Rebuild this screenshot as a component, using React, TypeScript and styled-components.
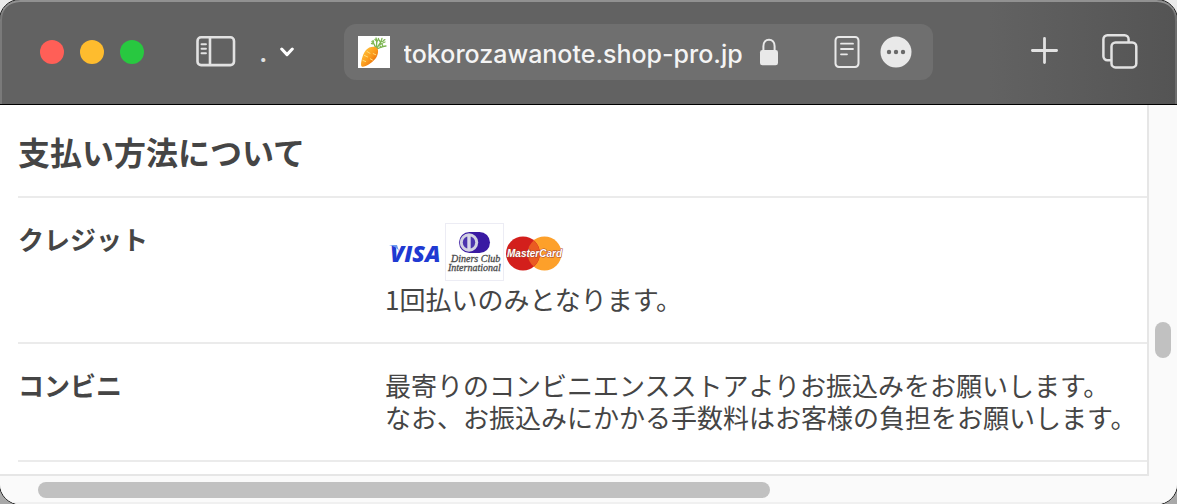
import React from "react";
import styled, { createGlobalStyle } from "styled-components";

const GlobalStyle = createGlobalStyle`
  *, *::before, *::after { box-sizing: border-box; }
  html { background: linear-gradient(#ebebeb, #a8a8a8); }
  body {
    margin: 0;
    font-family: "Noto Sans CJK JP", sans-serif;
    color: #454545;
  }
`;

const Window = styled.div`
  display: flex;
  flex-direction: column;
  min-height: 100vh;
  background: #fff;
  border-radius: 20px;
  overflow: hidden;
  outline: 1px solid #1c1c1c;
`;

const Toolbar = styled.header`
  display: flex;
  align-items: center;
  height: 105px;
  padding: 0 39px 0 40px;
  flex: none;
  background: linear-gradient(90deg, #626262 0%, #626262 84%, #545454 100%);
  border-bottom: 1px solid #000;
  border-radius: 20px 20px 0 0;
  box-shadow: inset 0 2px #919191, inset 2px 0 #7a7a7a, inset -2px 0 #6e6e6e;
`;

const WindowControls = styled.div`
  display: flex;
  gap: 16px;
  margin-right: 52px;
`;

const PlainButton = styled.button`
  display: flex;
  align-items: center;
  padding: 0;
  border: 0;
  background: none;
  color: #e2e2e2;
`;

const WindowControl = styled(PlainButton)<{ $color: string }>`
  width: 24px;
  height: 24px;
  border-radius: 50%;
  background: ${(p) => p.$color};
`;

const GroupButton = styled(PlainButton)`
  gap: 12px;
  margin: 0 50px 0 23px;
  font: 500 28px/28px Inter, sans-serif;
`;

const AddressBar = styled.form`
  display: flex;
  align-items: center;
  flex: 1;
  min-width: 0;
  height: 56px;
  padding: 0 21px 0 14px;
  border-radius: 12px;
  background: #6f6f6f;
`;

const AddressInput = styled.input`
  width: 346px;
  min-width: 0;
  margin: 0 9px 0 14px;
  padding: 4px 0 0;
  border: 0;
  outline: 0;
  background: none;
  color: #f4f4f4;
  font: 500 25px/32px Inter, sans-serif;
`;

const AddressActions = styled.div`
  display: flex;
  align-items: center;
  gap: 20px;
  margin-left: auto;
`;

const ToolbarActions = styled.div`
  display: flex;
  align-items: center;
  gap: 44px;
  margin-left: 97px;
`;

const Viewport = styled.div`
  display: flex;
  flex: 1;
`;

const Page = styled.main`
  flex: 1;
  min-width: 0;
  padding: 1px 0 12px 18px;
`;

const Heading = styled.h2`
  margin: 0;
  padding: 21px 0;
  font-size: 32px;
  line-height: 48px;
  font-weight: 700;
`;

const MethodTable = styled.table`
  width: 100%;
  border-collapse: separate;
  border-spacing: 0;
  border-bottom: 2px solid #ebebeb;
  font-size: 26px;
  line-height: 32px;
  text-align: left;
`;

const MethodName = styled.th`
  width: 367px;
  padding: 25px 0 27px;
  border-top: 2px solid #ebebeb;
  vertical-align: top;
  font-weight: 700;
`;

const MethodDetail = styled.td`
  padding: 25px 0 27px;
  border-top: 2px solid #ebebeb;
  vertical-align: top;
`;

const CardLogos = styled.div`
  display: flex;
  height: 60px;
`;

const Line = styled.p`
  margin: 0;
`;

const VerticalTrack = styled.div`
  width: 30px;
  padding: 217px 6px 0;
  background: #fafafa;
  border-left: 2px solid #e6e6e6;
`;

const VerticalThumb = styled.div`
  width: 16px;
  height: 36px;
  border-radius: 8px;
  background: #c1c1c1;
`;

const HorizontalTrack = styled.div`
  position: relative;
  height: 30px;
  padding: 6px 30px 6px 38px;
  background: #fafafa;
  border-bottom: 2px solid #f0f0f0;

  &::before {
    content: "";
    position: absolute;
    top: 0;
    left: 0;
    right: 28px;
    height: 2px;
    background: #e6e6e6;
  }
`;

const HorizontalThumb = styled.div`
  width: 66%;
  height: 16px;
  margin-top: 2px;
  border-radius: 8px;
  background: #c1c1c1;
`;

const SidebarIcon = () => (
  <svg width="40" height="32" viewBox="0 0 40 32" fill="none" stroke="currentColor" strokeWidth="2.6" aria-hidden="true">
    <rect x="1.5" y="1.3" width="36.5" height="27.8" rx="3.6" />
    <path d="M14 1.5v27.5" />
    <path d="M5.5 8.3h4.5M5.5 12.7h4.5M5.5 17.2h4.5" strokeWidth="1.9" strokeLinecap="round" />
  </svg>
);

const ChevronIcon = () => (
  <svg width="14" height="10" viewBox="0 0 14 10" fill="none" stroke="#fff" strokeWidth="3" strokeLinecap="round" strokeLinejoin="round" aria-hidden="true">
    <path d="M1.7 2 7 7.600 12.300 2" />
  </svg>
);

const Favicon = () => (
  <svg width="32" height="32" viewBox="0 0 32 32" aria-hidden="true">
    <defs>
      <linearGradient id="carrot" x1="0.2" y1="0.1" x2="0.9" y2="0.8">
        <stop offset="0" stopColor="#ffc23c" />
        <stop offset="0.55" stopColor="#fb9a1c" />
        <stop offset="1" stopColor="#e5660b" />
      </linearGradient>
    </defs>
    <rect width="32" height="32" fill="#fff" />
    <g fill="none" stroke="#7db653" strokeWidth="1.3" strokeLinecap="round">
      <path d="M17.5 13C17 9 16 7 14 5.5M18 12.5C19 8 19 5 18 2M18.500 12.500C21 9 23 7 24 2.500M19 13c3-1 5-3 9-3M20 10c3-2 4-3 7-4" />
      <path d="M13.500 7.500 16 8M15 4.500l1 2.500M17 3.500l2 2 1.500-3M21 4l1.500 2 3-1M24 8l1 2.500M22 10l1.500 2M25.500 4.500l1.500-1" strokeDasharray="1.600 1.100" />
    </g>
    <path d="M8 14c2.800-3.400 8.200-4.400 10.800-2.200 2.400 2.100 1.200 8-1.600 11.200C14.200 26.500 8 30.600 4.800 30.800 2.600 30.900 2.800 27.800 3.500 24.500 4.300 20.800 5.700 16.700 8 14Z" fill="url(#carrot)" />
    <path d="M9 15.500l3 1.800M6.500 19.500l3.200 1.500M17.800 18.800l-2.600-1.200M5 24.500l2.600 1M14.500 24l-2.200-1.200" stroke="#ffdc79" strokeWidth="1" strokeLinecap="round" />
  </svg>
);

const LockIcon = () => (
  <svg width="20" height="28" viewBox="0 0 20 28" aria-hidden="true">
    <path d="M4.400 13V8.200C4.400 4.200 6.700 1.700 10 1.700s5.600 2.500 5.600 6.500V13" fill="none" stroke="#e9e9e9" strokeWidth="2" />
    <rect x="1" y="12" width="18" height="15.300" rx="2.400" fill="#e9e9e9" />
  </svg>
);

const ReaderIcon = () => (
  <svg width="26" height="34" viewBox="0 0 26 34" fill="none" stroke="#e9e9e9" strokeWidth="2" aria-hidden="true">
    <rect x="1.500" y="2" width="23" height="30" rx="3.400" />
    <path d="M7 8.700h12M7 14h12M7 19.300h6" strokeWidth="1.800" strokeLinecap="round" />
  </svg>
);

const MoreIcon = () => (
  <svg width="32" height="32" viewBox="0 0 32 32" aria-hidden="true">
    <circle cx="16" cy="16" r="15.500" fill="#e9e9e9" />
    <g fill="#6a6a6a">
      <circle cx="9" cy="16" r="2.200" />
      <circle cx="16" cy="16" r="2.200" />
      <circle cx="23" cy="16" r="2.200" />
    </g>
  </svg>
);

const PlusIcon = () => (
  <svg width="28" height="30" viewBox="0 0 28 30" stroke="currentColor" strokeWidth="2.800" strokeLinecap="round" aria-hidden="true">
    <path d="M14.500 1.400v24.200M2.400 13.500h24.200" />
  </svg>
);

const TabsIcon = () => (
  <svg width="36" height="36" viewBox="0 0 36 36" fill="none" stroke="currentColor" strokeWidth="2.500" aria-hidden="true">
    <path d="M9.500 26.200H5.400a4 4 0 0 1-4-4V4.400a4 4 0 0 1 4-4v1h17.200a4 4 0 0 1 4 4v3" stroke="none" />
    <path d="M9.500 26.200H5.400a4 4 0 0 1-4-4V5.300a4 4 0 0 1 4-4h17.200a4 4 0 0 1 4 4v3" />
    <rect x="9.500" y="8.400" width="24.800" height="25" rx="4" />
  </svg>
);

const VisaLogo = () => (
  <svg width="60" height="60" viewBox="0 0 60 60" role="img" aria-label="VISA">
    <text x="5" y="39" fill="#1f3ad2" fontFamily="Open Sans, sans-serif" fontWeight="800" fontStyle="italic" fontSize="23">VISA</text>
    <path d="M4 22h8l2 6c-2-3-5-5-10-6Z" fill="#6d9af0" />
  </svg>
);

const DinersLogo = () => (
  <svg width="60" height="60" viewBox="0 0 60 60" role="img" aria-label="Diners Club International">
    <rect x="0.500" y="0.500" width="58" height="57" fill="#fff" stroke="#ececf4" />
    <rect x="14" y="9" width="31" height="21" rx="10.500" fill="#3a1aa3" />
    <circle cx="24" cy="19.500" r="9.200" fill="#d2d2e2" />
    <circle cx="24" cy="19.500" r="6.200" fill="#4b34ae" />
    <path d="M24 12.500v14" stroke="#d8d8e8" strokeWidth="3.400" />
    <g fill="#4b4b4b" stroke="#4b4b4b" strokeWidth="0.300" fontFamily="Liberation Serif, serif" fontStyle="italic">
      <text x="6" y="39" fontSize="10">Diners Club</text>
      <text x="3" y="48" fontSize="10">International</text>
    </g>
  </svg>
);

const MasterCardLogo = () => (
  <svg width="60" height="60" viewBox="0 0 60 60" role="img" aria-label="MasterCard">
    <circle cx="39.500" cy="30.500" r="17" fill="#fda02a" />
    <circle cx="18" cy="30.500" r="17" fill="#d31f1c" />
    <path d="M28.700 17.500a17 17 0 0 1 0 26a17 17 0 0 1 0-26Z" fill="#ea5b22" />
    <text x="2" y="34" fill="#fff" stroke="#a8402b" strokeWidth="1" paintOrder="stroke" fontFamily="Liberation Sans, sans-serif" fontWeight="700" fontStyle="italic" fontSize="10">MasterCard</text>
  </svg>
);

export default function App() {
  return (
    <>
      <GlobalStyle />
      <Window>
        <Toolbar>
          <WindowControls>
            <WindowControl type="button" $color="#ff5f57" aria-label="閉じる" />
            <WindowControl type="button" $color="#febc2e" aria-label="しまう" />
            <WindowControl type="button" $color="#28c840" aria-label="拡大" />
          </WindowControls>
          <PlainButton type="button" aria-label="サイドバー"><SidebarIcon /></PlainButton>
          <GroupButton type="button">.<ChevronIcon /></GroupButton>
          <AddressBar onSubmit={(e) => e.preventDefault()}>
            <Favicon />
            <AddressInput aria-label="アドレス" defaultValue="tokorozawanote.shop-pro.jp" spellCheck={false} />
            <LockIcon />
            <AddressActions>
              <PlainButton type="button" aria-label="リーダー"><ReaderIcon /></PlainButton>
              <PlainButton type="button" aria-label="その他"><MoreIcon /></PlainButton>
            </AddressActions>
          </AddressBar>
          <ToolbarActions>
            <PlainButton type="button" aria-label="新規タブ"><PlusIcon /></PlainButton>
            <PlainButton type="button" aria-label="タブの概要"><TabsIcon /></PlainButton>
          </ToolbarActions>
        </Toolbar>
        <Viewport>
          <Page>
            <Heading id="payment-heading">支払い方法について</Heading>
            <MethodTable aria-labelledby="payment-heading">
              <tbody>
                <tr>
                  <MethodName scope="row">クレジット</MethodName>
                  <MethodDetail>
                    <CardLogos>
                      <VisaLogo />
                      <DinersLogo />
                      <MasterCardLogo />
                    </CardLogos>
                    <Line>1回払いのみとなります。</Line>
                  </MethodDetail>
                </tr>
                <tr>
                  <MethodName scope="row">コンビニ</MethodName>
                  <MethodDetail>
                    <Line>最寄りのコンビニエンスストアよりお振込みをお願いします。</Line>
                    <Line>なお、お振込みにかかる手数料はお客様の負担をお願いします。</Line>
                  </MethodDetail>
                </tr>
              </tbody>
            </MethodTable>
          </Page>
          <VerticalTrack>
            <VerticalThumb />
          </VerticalTrack>
        </Viewport>
        <HorizontalTrack>
          <HorizontalThumb />
        </HorizontalTrack>
      </Window>
    </>
  );
}
